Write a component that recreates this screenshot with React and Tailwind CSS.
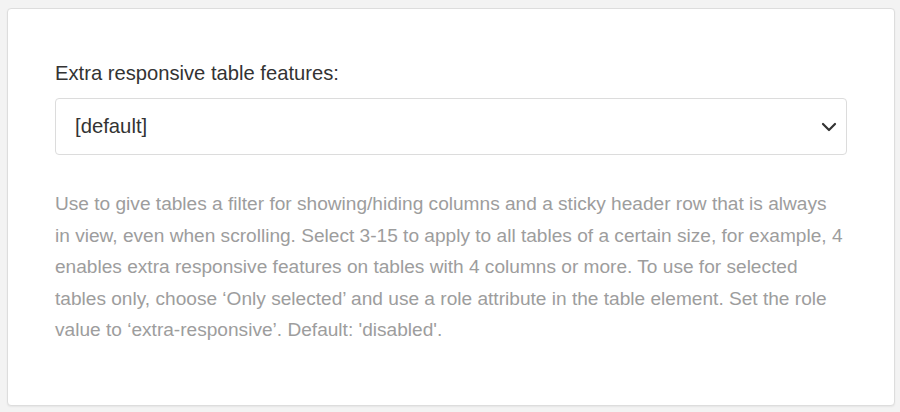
export default function App() {
  return (
    <div className="h-[412px] w-[900px] bg-[#f3f3f3] pt-[8px] pl-[7px] pr-[5px]" style={{ fontFamily: '"Liberation Sans", Arial, sans-serif' }}>
      <div className="h-[398px] rounded-[4px] border border-[#dddddd] bg-white px-[47px] pt-[51px] shadow-[0_1px_2px_rgba(0,0,0,0.06)]">
        <div className="text-[20.2px] leading-[26px] text-[#333333]">Extra responsive table features:</div>
        <div className="mt-[12px] flex h-[57px] items-center justify-between rounded-[4px] border border-[#dcdcdc] bg-white pl-[19px] pr-[8px]">
          <span className="text-[20.3px] text-[#333333]">[default]</span>
          <svg width="16" height="10" viewBox="0 0 16 10" className="mr-[1px]">
            <path d="M2 2 L8 8 L14 2" fill="none" stroke="#333333" strokeWidth="2.2" strokeLinecap="round" strokeLinejoin="round" />
          </svg>
        </div>
        <p className="mt-[33px] max-w-[790px] text-[19.1px] leading-[31.5px] text-[#9d9d9d]">
          Use to give tables a filter for showing/hiding columns and a sticky header row that is always in view, even when scrolling. Select 3-15 to apply to all tables of a certain size, for example, 4 enables extra responsive features on tables with 4 columns or more. To use for selected tables only, choose ‘Only selected’ and use a role attribute in the table element. Set the role value to ‘extra-responsive’. Default: 'disabled'.
        </p>
      </div>
    </div>
  );
}
